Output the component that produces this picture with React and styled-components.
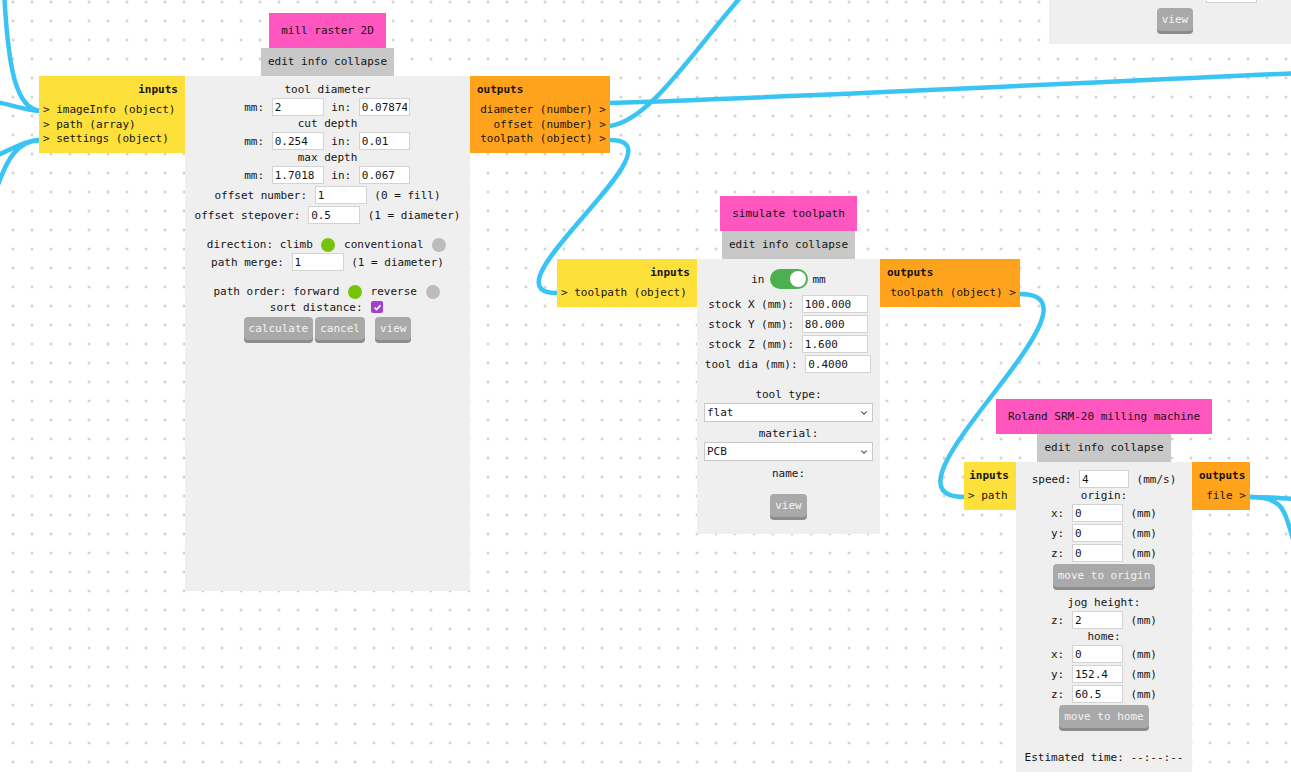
import React from 'react'
import styled, { createGlobalStyle } from 'styled-components'
import { ChevronDown } from 'lucide-react'

const GlobalStyle = createGlobalStyle`
  html, body {
    margin: 0;
    padding: 0;
    background: #fff;
  }
  body {
    font-family: 'DejaVu Sans Mono', 'Liberation Mono', monospace;
    font-size: 11px;
    color: #141414;
  }
`

const Canvas = styled.div`
  position: relative;
  width: 1291px;
  height: 777px;
  overflow: hidden;
  background-color: #fff;
  background-image: radial-gradient(circle, #c4c4c4 1px, transparent 1.4px);
  background-size: 19px 19px;
  background-position: 3.5px -7.5px;
`

const Wires = styled.svg`
  position: absolute;
  left: 0;
  top: 0;
  width: 1291px;
  height: 777px;
  pointer-events: none;
`

const Wire = styled.path`
  fill: none;
  stroke: #3ac4f4;
  stroke-width: 4.5;
  stroke-linecap: round;
`

const Node = styled.div`
  position: absolute;
  left: ${p => p.$x}px;
  top: ${p => p.$y}px;
  display: flex;
  align-items: flex-start;
`

const Ports = styled.div`
  margin-top: 63px;
  width: ${p => p.$w}px;
  box-sizing: border-box;
  padding: ${p => (p.$out ? '6px 4px 6px 7px' : '6px 7px 6px 4px')};
  background: ${p => (p.$out ? '#ffa31d' : '#fde03a')};
  text-align: ${p => (p.$out ? 'right' : 'left')};
  line-height: 14.5px;
  white-space: pre;
`

const PortsHead = styled.div`
  font-weight: bold;
  line-height: 15px;
  margin-bottom: 6px;
  text-align: ${p => (p.$out ? 'left' : 'right')};
`

const Middle = styled.div`
  display: flex;
  flex-direction: column;
  align-items: center;
  width: ${p => p.$w}px;
`

const Title = styled.div`
  background: #ff57bf;
  height: 35px;
  line-height: 35px;
  padding: 0 12px;
  white-space: nowrap;
`

const Bar = styled.div`
  background: #c8c8c8;
  height: 28px;
  line-height: 28px;
  padding: 0 7px;
  white-space: nowrap;
`

const Body = styled.div`
  align-self: stretch;
  box-sizing: border-box;
  height: ${p => p.$h}px;
  padding-top: ${p => p.$pt}px;
  background: #efefef;
  display: flex;
  flex-direction: column;
`

const Row = styled.div`
  height: ${p => p.$h || 20}px;
  display: flex;
  align-items: center;
  justify-content: ${p => (p.$end ? 'flex-end' : 'center')};
  padding-right: ${p => p.$pr || 0}px;
  white-space: pre;
`

const Label = styled.div`
  height: ${p => p.$h || 14}px;
  line-height: ${p => p.$h || 14}px;
  text-align: center;
  white-space: pre;
`

const Gap = styled.div`
  height: ${p => p.$h}px;
  flex: none;
`

const Field = styled.input`
  width: ${p => p.$w || 52}px;
  height: 18px;
  box-sizing: border-box;
  margin: 0 1px;
  padding: 0 2px;
  border: 1px solid #d3d3d3;
  background: #fff;
  font: inherit;
  color: #141414;
  outline: none;
`

const Btn = styled.button`
  height: 23px;
  margin: 0 0 3px ${p => p.$ml || 0}px;
  padding: 0 5px;
  border: none;
  border-radius: 4px;
  background: #a9a9a9;
  box-shadow: 0 3px 0 #8c8c8c;
  color: #f3f3f3;
  font: inherit;
  cursor: pointer;
`

const Radio = styled.span`
  display: inline-block;
  width: 14px;
  height: 14px;
  margin: 0 2px;
  border-radius: 50%;
  background: ${p => (p.$on ? '#78c40b' : '#bcbcbc')};
`

const Check = styled.span`
  display: inline-flex;
  align-items: center;
  justify-content: center;
  width: 12px;
  height: 12px;
  margin: 0 2px;
  border-radius: 2px;
  background: #a43fcf;
`

const Toggle = styled.span`
  position: relative;
  display: inline-block;
  width: 38px;
  height: 20px;
  margin: 0 5px;
  border-radius: 10px;
  background: #4caf50;
`

const Knob = styled.span`
  position: absolute;
  right: 2px;
  top: 2px;
  width: 16px;
  height: 16px;
  border-radius: 50%;
  background: #fff;
`

const SelectBox = styled.div`
  position: relative;
  align-self: center;
  width: 169px;
  height: 19px;
`

const Select = styled.select`
  appearance: none;
  width: 100%;
  height: 100%;
  box-sizing: border-box;
  margin: 0;
  padding: 0 2px;
  border: 1px solid #c9c9c9;
  border-radius: 0;
  background: #fff;
  font: inherit;
  color: #141414;
`

const Chevron = styled(ChevronDown)`
  position: absolute;
  right: 4px;
  top: 5px;
  pointer-events: none;
`

function PortList({ w, out, items }) {
  return (
    <Ports $w={w} $out={out}>
      <PortsHead $out={out}>{out ? 'outputs' : 'inputs'}</PortsHead>
      {items.map(it => (
        <div key={it}>{out ? `${it} >` : `> ${it}`}</div>
      ))}
    </Ports>
  )
}

function Header({ title }) {
  return (
    <>
      <Title>{title}</Title>
      <Bar>edit info collapse</Bar>
    </>
  )
}

function Dropdown({ value }) {
  return (
    <SelectBox>
      <Select defaultValue={value}>
        <option>{value}</option>
      </Select>
      <Chevron size={10} strokeWidth={2.5} color="#333" />
    </SelectBox>
  )
}

function MillRaster() {
  return (
    <Node $x={39} $y={13}>
      <PortList w={146} items={['imageInfo (object)', 'path (array)', 'settings (object)']} />
      <Middle $w={285}>
        <Header title="mill raster 2D" />
        <Body $h={515} $pt={7}>
          <Label>tool diameter</Label>
          <Row>mm: <Field defaultValue="2" /> in: <Field $w={51} defaultValue="0.07874" /></Row>
          <Label>cut depth</Label>
          <Row>mm: <Field defaultValue="0.254" /> in: <Field $w={51} defaultValue="0.01" /></Row>
          <Label>max depth</Label>
          <Row>mm: <Field defaultValue="1.7018" /> in: <Field $w={51} defaultValue="0.067" /></Row>
          <Row>offset number: <Field defaultValue="1" /> (0 = fill)</Row>
          <Row>offset stepover: <Field defaultValue="0.5" /> (1 = diameter)</Row>
          <Gap $h={12} />
          <Row $h={15}>direction: climb <Radio $on /> conventional <Radio /></Row>
          <Row>path merge: <Field defaultValue="1" /> (1 = diameter)</Row>
          <Gap $h={12} />
          <Row $h={15}>path order: forward <Radio $on /> reverse <Radio /></Row>
          <Row $h={16}>sort distance: <Check>
              <svg width="9" height="9" viewBox="0 0 10 10">
                <path d="M1.8 5.2 L4 7.3 L8.3 2.6" fill="none" stroke="#fff" strokeWidth="1.8" />
              </svg>
            </Check>
          </Row>
          <Gap $h={2} />
          <Row $h={26}>
            <Btn>calculate</Btn>
            <Btn $ml={2}>cancel</Btn>
            <Btn $ml={10}>view</Btn>
          </Row>
        </Body>
      </Middle>
      <PortList w={140} out items={['diameter (number)', 'offset (number)', 'toolpath (object)']} />
    </Node>
  )
}

function SimulateToolpath() {
  return (
    <Node $x={557} $y={196}>
      <PortList w={140} items={['toolpath (object)']} />
      <Middle $w={183}>
        <Header title="simulate toolpath" />
        <Body $h={275} $pt={9}>
          <Row $h={22}>in<Toggle><Knob /></Toggle>mm</Row>
          <Gap $h={4} />
          <Row>stock X (mm): <Field $w={66} defaultValue="100.000" /></Row>
          <Row>stock Y (mm): <Field $w={66} defaultValue="80.000" /></Row>
          <Row>stock Z (mm): <Field $w={66} defaultValue="1.600" /></Row>
          <Row>tool dia (mm): <Field $w={66} defaultValue="0.4000" /></Row>
          <Gap $h={12} />
          <Label $h={17}>tool type:</Label>
          <Dropdown value="flat" />
          <Gap $h={3} />
          <Label $h={17}>material:</Label>
          <Dropdown value="PCB" />
          <Gap $h={4} />
          <Label $h={17}>name:</Label>
          <Gap $h={12} />
          <Row $h={26}><Btn>view</Btn></Row>
        </Body>
      </Middle>
      <PortList w={140} out items={['toolpath (object)']} />
    </Node>
  )
}

function Roland() {
  return (
    <Node $x={964} $y={399}>
      <PortList w={52} items={['path']} />
      <Middle $w={176}>
        <Header title="Roland SRM-20 milling machine" />
        <Body $h={310} $pt={7}>
          <Row>speed: <Field $w={50} defaultValue="4" /> (mm/s)</Row>
          <Label>origin:</Label>
          <Row>x: <Field $w={51} defaultValue="0" /> (mm)</Row>
          <Row>y: <Field $w={51} defaultValue="0" /> (mm)</Row>
          <Row>z: <Field $w={51} defaultValue="0" /> (mm)</Row>
          <Row $h={27}><Btn>move to origin</Btn></Row>
          <Gap $h={6} />
          <Label>jog height:</Label>
          <Row>z: <Field $w={51} defaultValue="2" /> (mm)</Row>
          <Label>home:</Label>
          <Row>x: <Field $w={51} defaultValue="0" /> (mm)</Row>
          <Row>y: <Field $w={51} defaultValue="152.4" /> (mm)</Row>
          <Row>z: <Field $w={51} defaultValue="60.5" /> (mm)</Row>
          <Gap $h={1} />
          <Row $h={26}><Btn>move to home</Btn></Row>
          <Gap $h={20} />
          <Label>Estimated time: --:--:--</Label>
        </Body>
      </Middle>
      <PortList w={58} out items={['file']} />
    </Node>
  )
}

function ClippedNode() {
  return (
    <Node $x={1049} $y={-40}>
      <Middle $w={252}>
        <Body $h={84} $pt={24}>
          <Row $end $pr={43}>(mm/s)      <Field $w={51} defaultValue="" /></Row>
          <Gap $h={3} />
          <Row $h={27}><Btn>view</Btn></Row>
        </Body>
      </Middle>
    </Node>
  )
}

export default function App() {
  return (
    <>
      <GlobalStyle />
      <Canvas>
        <Wires viewBox="0 0 1291 777">
          <Wire d="M 4 -10 C 8 70, 16 108, 40 111" />
          <Wire d="M -10 101 C 12 104, 22 110, 40 111" />
          <Wire d="M -10 158 C 12 150, 22 141, 40 140" />
          <Wire d="M -6 196 C 6 160, 16 141, 40 140" />
          <Wire d="M 610 103 C 800 97, 1100 82, 1300 73" />
          <Wire d="M 610 126 C 650 120, 690 55, 745 -8" />
          <Wire d="M 610 140 C 690 140, 477 293, 557 293" />
          <Wire d="M 1020 294 C 1120 294, 864 497, 964 497" />
          <Wire d="M 1250 497 C 1275 497, 1285 499, 1300 499" />
          <Wire d="M 1250 497 C 1290 497, 1283 515, 1300 560" />
        </Wires>
        <ClippedNode />
        <MillRaster />
        <SimulateToolpath />
        <Roland />
      </Canvas>
    </>
  )
}
